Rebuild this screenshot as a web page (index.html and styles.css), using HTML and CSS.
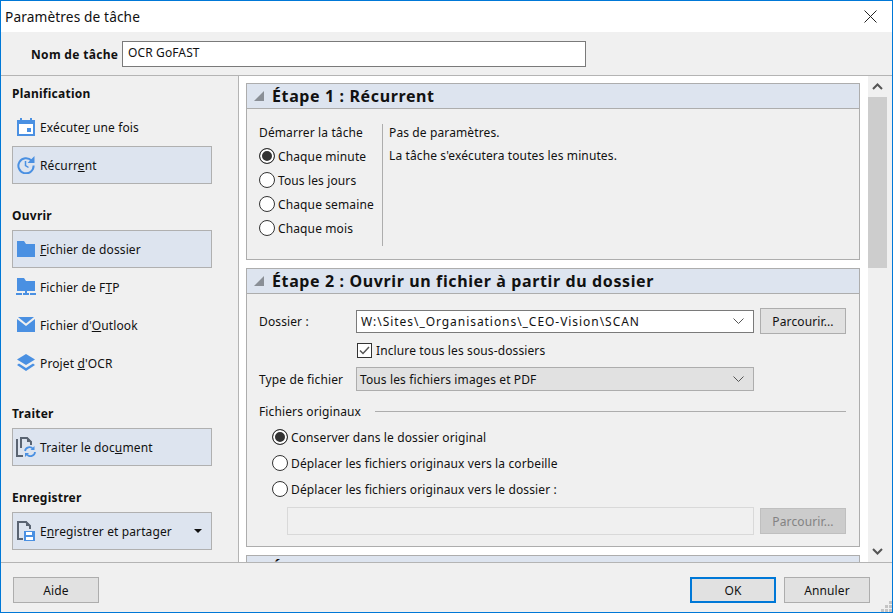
FILE: index.html
```html
<!DOCTYPE html>
<html lang="fr">
<head>
    <meta charset="UTF-8">
    <title>Paramètres de tâche</title>
    <link rel="stylesheet" href="styles.css">
</head>
<body>
<div class="window">
    <div class="titlebar">
        <span class="title">Paramètres de tâche</span>
        <svg class="close" width="13" height="13" viewBox="0 0 13 13"><path d="M.5.5l12 12M12.5.5l-12 12" stroke="#222" fill="none"/></svg>
    </div>
    <div class="namerow">
        <label class="namelabel">Nom de tâche</label>
        <div class="nameinput">OCR GoFAST</div>
    </div>
    <div class="main">
        <aside class="sidebar">
            <h3>Planification</h3>
            <div class="item">
                <svg class="icon" viewBox="0 0 18 18"><path fill="#4a90e2" d="M0 2h3V0h2v2h8V0h2v2h3v16H0z"/><path fill="#fff" d="M2 6h14v10H2z"/><path fill="#4a90e2" d="M10 10h4v4h-4z"/></svg>
                <span>Exécute<u>r</u> une fois</span>
            </div>
            <div class="item active">
                <svg class="icon" viewBox="0 0 18 18"><path fill="none" stroke="#4a90e2" stroke-width="2" d="M14.5 4.500A7.600 7.600 0 1 0 16.600 9.500"/><path fill="#4a90e2" d="M17.500 0v7h-7z"/><path fill="none" stroke="#4a90e2" stroke-width="1.500" d="M8.500 5v4.500l3 2"/></svg>
                <span>Récurr<u>e</u>nt</span>
            </div>
            <h3>Ouvrir</h3>
            <div class="item active">
                <svg class="icon" viewBox="0 0 18 18"><path fill="#4a90e2" d="M0 1h7l2 3h9v13H0z"/></svg>
                <span><u>F</u>ichier de dossier</span>
            </div>
            <div class="item">
                <svg class="icon wide" viewBox="0 0 20 18"><path fill="#4a90e2" d="M1 0h7l2 3h9v10H1z"/><path fill="#4a90e2" d="M9 13h2v2H9zM0 15h6v2H0zM7 15h6v2H7zM14 15h6v2h-6z"/></svg>
                <span>Fichier de F<u>T</u>P</span>
            </div>
            <div class="item">
                <svg class="icon" viewBox="0 0 18 18"><path fill="#4a90e2" d="M0 3l9 7 9-7v13H0z"/><path fill="#4a90e2" d="M1 1h16L9 7.500z"/></svg>
                <span>Fichier d'<u>O</u>utlook</span>
            </div>
            <div class="item">
                <svg class="icon" viewBox="0 0 18 18"><path fill="#4a90e2" d="M9 0l9 5.500-9 5.500-9-5.500z"/><path fill="#4a90e2" d="M2 9.500l7 4.500 7-4.500 2 1.500-9 6-9-6z"/></svg>
                <span>Projet <u>d</u>'OCR</span>
            </div>
            <h3>Traiter</h3>
            <div class="item active">
                <svg class="icon wide" viewBox="0 0 20 20"><path fill="none" stroke="#5a6472" stroke-width="2" d="M1 2v17h6M5 11V1h6l4 4v3"/><path fill="#5a6472" d="M11 0l5 5h-5z"/><path fill="none" stroke="#4a90e2" stroke-width="1.800" d="M9 14a4.500 4.500 0 0 1 8-2M19 15a4.500 4.500 0 0 1-8 2.500"/><path fill="#4a90e2" d="M18.500 9v4h-4zM9 20v-4h4z"/></svg>
                <span>Traiter le doc<u>u</u>ment</span>
            </div>
            <h3>Enregistrer</h3>
            <div class="item active">
                <svg class="icon wide" viewBox="0 0 20 20"><path fill="none" stroke="#5a6472" stroke-width="2" d="M7 18H2V1h8l4 4v3"/><path fill="#5a6472" d="M10 0l5 5h-5z"/><path fill="#4a90e2" d="M8 10h11v10H8z"/><path fill="#fff" d="M10 11h6v3h-6zM10 16h7v3h-7z"/></svg>
                <span>E<u>n</u>registrer et partager</span>
                <i class="caret"></i>
            </div>
        </aside>
        <div class="pane">
            <div class="steps">
                <section class="panel first">
                    <header class="panelhead"><i class="tri"></i><h2>Étape 1 : Récurrent</h2></header>
                    <div class="panelbody cols">
                        <div class="freq">
                            <div class="freqlabel">Démarrer la tâche</div>
                            <div class="radio on"><i></i>Chaque minute</div>
                            <div class="radio"><i></i>Tous les jours</div>
                            <div class="radio"><i></i>Chaque semaine</div>
                            <div class="radio"><i></i>Chaque mois</div>
                        </div>
                        <div class="freqinfo">
                            <p>Pas de paramètres.</p>
                            <p>La tâche s'exécutera toutes les minutes.</p>
                        </div>
                    </div>
                </section>
                <section class="panel second">
                    <header class="panelhead"><i class="tri"></i><h2>Étape 2 : Ouvrir un fichier à partir du dossier</h2></header>
                    <div class="panelbody form">
                        <div class="row folder">
                            <label>Dossier :</label>
                            <div class="combo white"><span class="path">W:\Sites\_Organisations\_CEO-Vision\SCAN</span><svg width="11" height="6" viewBox="0 0 11 6"><path d="M.5.500l5 5 5-5" fill="none" stroke="#555"/></svg></div>
                            <button class="btn">Parcourir...</button>
                        </div>
                        <div class="check">
                            <svg width="15" height="15" viewBox="0 0 15 15"><rect x=".5" y=".5" width="14" height="14" fill="#fff" stroke="#333"/><path d="M3 7.500l3 3 6-6.500" fill="none" stroke="#555" stroke-width="1.500"/></svg>
                            Inclure tous les sous-dossiers
                        </div>
                        <div class="row type">
                            <label>Type de fichier</label>
                            <div class="combo">Tous les fichiers images et PDF<svg width="11" height="6" viewBox="0 0 11 6"><path d="M.5.500l5 5 5-5" fill="none" stroke="#555"/></svg></div>
                        </div>
                        <div class="legend"><span>Fichiers originaux</span><hr></div>
                        <div class="options">
                            <div class="radio on"><i></i>Conserver dans le dossier original</div>
                            <div class="radio"><i></i>Déplacer les fichiers originaux vers la corbeille</div>
                            <div class="radio"><i></i>Déplacer les fichiers originaux vers le dossier :</div>
                        </div>
                        <div class="row target">
                            <div class="disabledinput"></div>
                            <button class="btn disabled">Parcourir...</button>
                        </div>
                    </div>
                </section>
                <section class="panel">
                    <header class="panelhead"><i class="tri"></i><h2>Étape 3 : Traiter le document</h2></header>
                </section>
            </div>
            <div class="scrollbar">
                <svg class="arrow" width="11" height="7" viewBox="0 0 11 7"><path d="M1 6l4.500-4.500L10 6" fill="none" stroke="#555" stroke-width="2"/></svg>
                <div class="track"><div class="thumb"></div></div>
                <svg class="arrow" width="11" height="7" viewBox="0 0 11 7"><path d="M1 1l4.500 4.500L10 1" fill="none" stroke="#555" stroke-width="2"/></svg>
            </div>
        </div>
    </div>
    <footer class="footer">
        <button class="btn">Aide</button>
        <div class="actions">
            <button class="btn default">OK</button>
            <button class="btn">Annuler</button>
        </div>
        <svg class="grip" width="11" height="11" viewBox="0 0 11 11"><path fill="#c4c4c4" d="M8 0h3v3H8zM4 4h3v3H4zM8 4h3v3H8zM0 8h3v3H0zM4 8h3v3H4zM8 8h3v3H8z"/></svg>
    </footer>
</div>
</body>
</html>
```

FILE: styles.css
```css
* { box-sizing: border-box; }
html, body { margin: 0; height: 100%; }
body { font-family: "Noto Sans", Arial, sans-serif; font-size: 12px; letter-spacing: .12px; color: #111; overflow: hidden; }
h2, h3, p { margin: 0; }

.window {
    position: relative;
    width: 893px;
    height: 613px;
    border: 1px solid #0078d7;
    background: #f0f0f0;
    display: flex;
    flex-direction: column;
}

.titlebar {
    height: 31px;
    flex: none;
    background: #fff;
    display: flex;
    align-items: center;
    justify-content: space-between;
    padding: 0 15px 0 4px;
}
.title { font-size: 13.7px; }

.namerow {
    height: 44px;
    flex: none;
    display: flex;
    align-items: center;
    padding: 0 0 0 30px;
    border-bottom: 1px solid #b4b4b4;
}
.namelabel { font-weight: bold; width: 91px; letter-spacing: .32px; padding-top: 2px; }
.nameinput {
    width: 464px;
    height: 26px;
    background: #fff;
    border: 1px solid #7a7a7a;
    padding: 2px 5px;
}

.main { flex: 1; display: flex; min-height: 0; }

.sidebar {
    width: 238px;
    flex: none;
    padding: 11px 26px 0 11px;
    border-right: 1px solid #b4b4b4;
    overflow: hidden;
}
.sidebar h3 {
    font-size: 12px;
    line-height: 14px;
    letter-spacing: .25px;
    margin: 25px 0 7px;
}
.sidebar h3:first-child { margin-top: 0; }

.item {
    height: 38px;
    display: flex;
    align-items: center;
    gap: 5px;
    padding: 0 9px 0 4px;
    border: 1px solid transparent;
}
.item.active { background: #dde4ef; border-color: #b0b0b0; }
.icon { width: 18px; height: 18px; flex: none; }
.icon.wide { width: 20px; height: 20px; margin: 0 -1px; }
.caret {
    margin-left: auto;
    border: 4px solid transparent;
    border-top: 4px solid #111;
    border-bottom: 0;
}

.pane { flex: 1; display: flex; background: #fff; min-width: 0; }
.steps { flex: 1; padding: 7px 8px 0 7px; overflow: hidden; min-width: 0; }
.panel { border: 1px solid #adadad; background: #f0f0f0; margin-bottom: 8px; }
.panel.first { height: 177px; }
.panel.second { height: 279px; }
.panelhead {
    height: 25px;
    background: #dde4ef;
    border-bottom: 1px solid #adadad;
    display: flex;
    align-items: center;
    padding-left: 7px;
}
.panelhead h2 { font-size: 16px; line-height: 22px; letter-spacing: .62px; }
.tri {
    width: 10px;
    height: 10px;
    margin-right: 8px;
    background: #8a8f96;
    clip-path: polygon(100% 0, 100% 100%, 0 100%);
}

.cols { display: flex; padding: 15px 12px 0; }
.freq { width: 124px; height: 122px; border-right: 1px solid #adadad; }
.freqlabel { line-height: 18px; margin-bottom: 2px; }
.freqinfo { padding-left: 6px; }
.freqinfo p { line-height: 18px; margin-bottom: 5px; }

.radio { display: flex; align-items: center; height: 24px; gap: 3px; }
.radio i {
    width: 16px;
    height: 16px;
    flex: none;
    border-radius: 50%;
    border: 1px solid #333;
    background: #fff;
}
.radio.on i { background: #333; box-shadow: inset 0 0 0 2px #fff; }

.form { padding: 14px 13px 0 12px; }
.row { display: flex; align-items: center; }
.row label { width: 97px; flex: none; }
.folder { height: 26px; }
.combo {
    width: 398px;
    height: 24px;
    flex: none;
    display: flex;
    align-items: center;
    justify-content: space-between;
    padding: 0 9px 0 3px;
    background: #e1e1e1;
    border: 1px solid #adadad;
}
.combo.white { height: 23px; background: #fff; border-color: #7a7a7a; padding-left: 4px; }
.path { letter-spacing: .95px; }
.btn {
    width: 86px;
    height: 26px;
    font: inherit;
    letter-spacing: inherit;
    color: inherit;
    background: #e1e1e1;
    border: 1px solid #adadad;
    padding: 0;
}
.row .btn { margin-left: 6px; }
.btn.disabled { background: #ccc; color: #838383; border-color: #bfbfbf; }
.btn.default { border: 2px solid #0078d7; }

.check {
    display: flex;
    align-items: center;
    gap: 4px;
    height: 18px;
    margin: 7px 0 0 98px;
}
.type { height: 24px; margin-top: 8px; }
.legend { display: flex; align-items: center; gap: 14px; height: 18px; margin-top: 11px; }
.legend hr { flex: 1; margin: 0; border: 0; border-top: 1px solid #adadad; }
.options { margin: 4px 0 0 13px; }
.options .radio { height: 26px; }
.target { margin: 5px 0 0 28px; height: 28px; }
.disabledinput {
    width: 467px;
    height: 28px;
    flex: none;
    border: 1px solid #d9d9d9;
    background: #f0f0f0;
}

.scrollbar {
    width: 24px;
    flex: none;
    padding-right: 5px;
    background: #f0f0f0;
    display: flex;
    flex-direction: column;
    align-items: center;
    padding-top: 7px;
}
.track { flex: 1; width: 100%; margin: 7px 0; }
.thumb { height: 171px; background: #cdcdcd; }
.scrollbar .arrow { flex: none; }
.scrollbar .arrow:last-child { margin-bottom: 7px; }

.footer {
    height: 50px;
    flex: none;
    border-top: 1px solid #b4b4b4;
    display: flex;
    align-items: center;
    justify-content: space-between;
    padding: 5px 22px 0 12px;
}
.actions { display: flex; gap: 8px; }
.grip { position: absolute; right: 0; bottom: 0; }
```
